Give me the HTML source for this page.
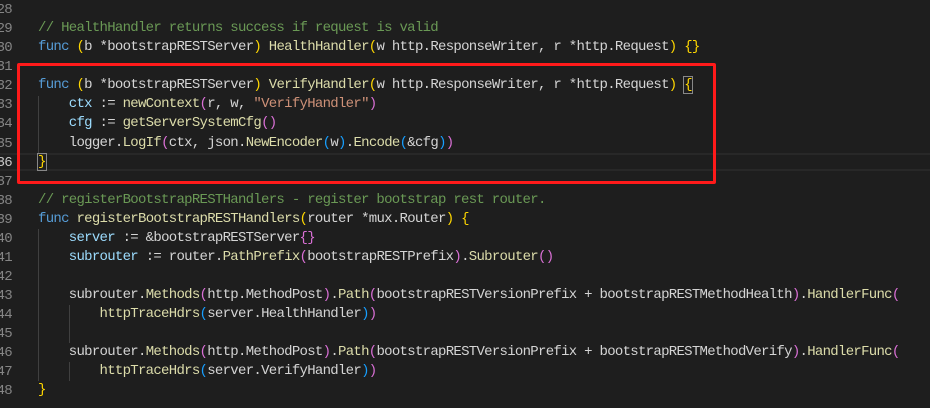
<!DOCTYPE html>
<html><head><meta charset="utf-8"><style>
body{margin:0;width:930px;height:406px;background:#1e1e1e;overflow:hidden;position:relative;font-family:"Liberation Mono",monospace;font-size:14px;letter-spacing:-0.71px;color:#d4d4d4}
.w{position:absolute;left:0;top:2px;width:930px;height:406px}
.l{position:absolute;left:38px;height:19px;line-height:19px;white-space:pre}
.n{position:absolute;right:918px;height:19px;line-height:19px;color:#858585;text-align:right;white-space:pre}
.k{color:#569cd6}.f{color:#dcdcaa}.v{color:#9cdcfe}.s{color:#ce9178}.c{color:#6a9955}
.y{color:#ffd700}.p{color:#da70d6}.b{color:#179fff}
.g{position:absolute;width:1px;background:#404040}
.bx{outline:1px solid #888;}
</style></head><body><div class="w">
<div style="position:absolute;left:0;right:0;top:151px;height:18px;border-top:2px solid #282828;border-bottom:2px solid #282828;box-sizing:border-box"></div>
<div class="g" style="left:38px;top:94px;height:57px"></div>
<div class="g" style="left:38px;top:227px;height:152px"></div>
<div class="g" style="left:69px;top:303px;height:38px"></div>
<div class="g" style="left:69px;top:360px;height:19px"></div>

<div class="n" style="top:-1px">28</div>
<div class="n" style="top:18px">29</div>
<div class="n" style="top:37px">30</div>
<div class="n" style="top:56px">31</div>
<div class="n" style="top:75px">32</div>
<div class="n" style="top:94px">33</div>
<div class="n" style="top:113px">34</div>
<div class="n" style="top:133px">35</div>
<div class="n" style="top:152px;color:#c6c6c6">36</div>
<div class="n" style="top:171px">37</div>
<div class="n" style="top:190px">38</div>
<div class="n" style="top:209px">39</div>
<div class="n" style="top:228px">40</div>
<div class="n" style="top:247px">41</div>
<div class="n" style="top:266px">42</div>
<div class="n" style="top:285px">43</div>
<div class="n" style="top:304px">44</div>
<div class="n" style="top:323px">45</div>
<div class="n" style="top:342px">46</div>
<div class="n" style="top:361px">47</div>
<div class="n" style="top:380px">48</div>

<div class="l c" style="top:17px">// HealthHandler returns success if request is valid</div>
<div class="l" style="top:36px"><span class="k">func</span> <span class="y">(</span>b *bootstrapRESTServer<span class="y">)</span> <span class="f">HealthHandler</span><span class="y">(</span>w http.ResponseWriter, r *http.Request<span class="y">)</span> <span class="y">{}</span></div>
<div class="l" style="top:74px"><span class="k">func</span> <span class="y">(</span>b *bootstrapRESTServer<span class="y">)</span> <span class="f">VerifyHandler</span><span class="y">(</span>w http.ResponseWriter, r *http.Request<span class="y">)</span> <span class="y bx">{</span></div>
<div class="l" style="top:93px">    <span class="v">ctx</span> := <span class="f">newContext</span><span class="p">(</span>r, w, <span class="s">"VerifyHandler"</span><span class="p">)</span></div>
<div class="l" style="top:112px">    <span class="v">cfg</span> := <span class="f">getServerSystemCfg</span><span class="p">()</span></div>
<div class="l" style="top:132px">    logger.<span class="f">LogIf</span><span class="p">(</span>ctx, json.<span class="f">NewEncoder</span><span class="b">(</span>w<span class="b">)</span>.<span class="f">Encode</span><span class="b">(</span>&amp;cfg<span class="b">)</span><span class="p">)</span></div>
<div class="l" style="top:151px"><span class="y bx">}</span></div>
<div class="l c" style="top:189px">// registerBootstrapRESTHandlers - register bootstrap rest router.</div>
<div class="l" style="top:208px"><span class="k">func</span> <span class="f">registerBootstrapRESTHandlers</span><span class="y">(</span>router *mux.Router<span class="y">)</span> <span class="y">{</span></div>
<div class="l" style="top:227px">    <span class="v">server</span> := &amp;bootstrapRESTServer<span class="p">{}</span></div>
<div class="l" style="top:246px">    <span class="v">subrouter</span> := router.<span class="f">PathPrefix</span><span class="p">(</span>bootstrapRESTPrefix<span class="p">)</span>.<span class="f">Subrouter</span><span class="p">()</span></div>
<div class="l" style="top:284px">    subrouter.<span class="f">Methods</span><span class="p">(</span>http.MethodPost<span class="p">)</span>.<span class="f">Path</span><span class="p">(</span>bootstrapRESTVersionPrefix + bootstrapRESTMethodHealth<span class="p">)</span>.<span class="f">HandlerFunc</span><span class="p">(</span></div>
<div class="l" style="top:303px">        <span class="f">httpTraceHdrs</span><span class="b">(</span>server.HealthHandler<span class="b">)</span><span class="p">)</span></div>
<div class="l" style="top:341px">    subrouter.<span class="f">Methods</span><span class="p">(</span>http.MethodPost<span class="p">)</span>.<span class="f">Path</span><span class="p">(</span>bootstrapRESTVersionPrefix + bootstrapRESTMethodVerify<span class="p">)</span>.<span class="f">HandlerFunc</span><span class="p">(</span></div>
<div class="l" style="top:360px">        <span class="f">httpTraceHdrs</span><span class="b">(</span>server.VerifyHandler<span class="b">)</span><span class="p">)</span></div>
<div class="l" style="top:379px"><span class="y">}</span></div>
<div style="position:absolute;left:17px;top:61px;width:699px;height:121px;border:3px solid #ff1a1a;box-sizing:border-box;border-radius:2px"></div>
</div>
</body></html>
